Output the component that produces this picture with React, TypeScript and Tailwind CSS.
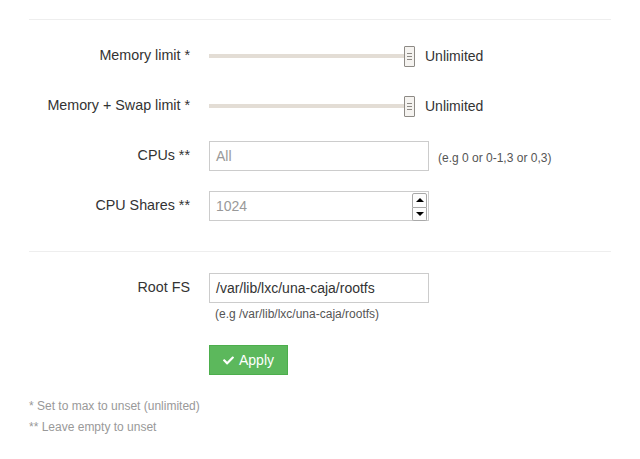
import React from 'react';
import { FaCheck } from 'react-icons/fa';

const Slider: React.FC = () => (
  <div className="flex items-center h-full">
    <div className="relative w-[206px] h-[21px] flex items-center">
      <div className="w-[196px] h-[4px] bg-[#e3ddd5]" />
      <div className="absolute left-[195px] top-0 w-[11px] h-[21px] bg-[#f5f3f0] border border-[#8d8a85] rounded-[1px] flex flex-col items-center justify-center gap-[2px]">
        <div className="w-[5px] h-px bg-[#8d8a85]" />
        <div className="w-[5px] h-px bg-[#8d8a85]" />
        <div className="w-[5px] h-px bg-[#8d8a85]" />
      </div>
    </div>
    <span className="ml-[10px] text-[14px] text-[#333]">Unlimited</span>
  </div>
);

const Spinner: React.FC = () => (
  <div className="absolute right-[1px] top-[1px] w-[15px] h-[28px] flex flex-col">
    <div className="flex-1 border border-[#a9a9a9] rounded-t-[2px] bg-[#fdfdfd] flex items-center justify-center">
      <div className="w-0 h-0 border-l-[4px] border-r-[4px] border-b-[4px] border-l-transparent border-r-transparent border-b-black" />
    </div>
    <div className="flex-1 border border-t-0 border-[#a9a9a9] rounded-b-[2px] bg-[#fdfdfd] flex items-center justify-center">
      <div className="w-0 h-0 border-l-[4px] border-r-[4px] border-t-[4px] border-l-transparent border-r-transparent border-t-black" />
    </div>
  </div>
);

const Row: React.FC<{ label: string; children: React.ReactNode }> = ({ label, children }) => (
  <div className="flex h-[30px] items-center">
    <label className="w-[190px] text-right text-[14.3px] text-[#333]">{label}</label>
    <div className="ml-[19px] h-full flex items-center">{children}</div>
  </div>
);

const App: React.FC = () => {
  return (
    <div className="w-[640px] h-[459px] bg-white pt-[19px] px-[29px] font-['Liberation_Sans',Arial,sans-serif]">
      <div className="border-t border-[#eeeeee]" />
      <div className="mt-[21px] -ml-[29px] flex flex-col gap-[20px]">
        <Row label="Memory limit *">
          <Slider />
        </Row>
        <Row label="Memory + Swap limit *">
          <Slider />
        </Row>
        <Row label="CPUs **">
          <div className="w-[220px] h-[30px] border border-[#cccccc] flex items-center px-[6px] text-[14px] text-[#999]">All</div>
          <span className="ml-[9px] mt-[3px] text-[12px] text-[#555]">(e.g 0 or 0-1,3 or 0,3)</span>
        </Row>
        <Row label="CPU Shares **">
          <div className="relative w-[220px] h-[30px] border border-[#cccccc] flex items-center px-[6px] text-[14px] text-[#999]">
            1024
            <Spinner />
          </div>
        </Row>
      </div>
      <div className="mt-[30px] border-t border-[#eeeeee]" />
      <div className="mt-[21px] -ml-[29px]">
        <Row label="Root FS">
          <div className="w-[220px] h-[30px] border border-[#cccccc] flex items-center px-[6px] text-[14px] text-[#333]">/var/lib/lxc/una-caja/rootfs</div>
        </Row>
        <div className="ml-[215px] mt-[3px] text-[12px] leading-[17px] text-[#555]">(e.g /var/lib/lxc/una-caja/rootfs)</div>
        <div className="ml-[209px] mt-[22px]">
          <button className="h-[30px] w-[79px] bg-[#5cb85c] border border-[#4cae4c] text-white text-[14px] flex items-center justify-center gap-[5px]">
            <FaCheck className="w-[11px] h-[11px]" />
            Apply
          </button>
        </div>
      </div>
      <div className="mt-[21px] text-[12px] text-[#999] leading-[21px]">
        <div>* Set to max to unset (unlimited)</div>
        <div>** Leave empty to unset</div>
      </div>
    </div>
  );
};

export default App;
